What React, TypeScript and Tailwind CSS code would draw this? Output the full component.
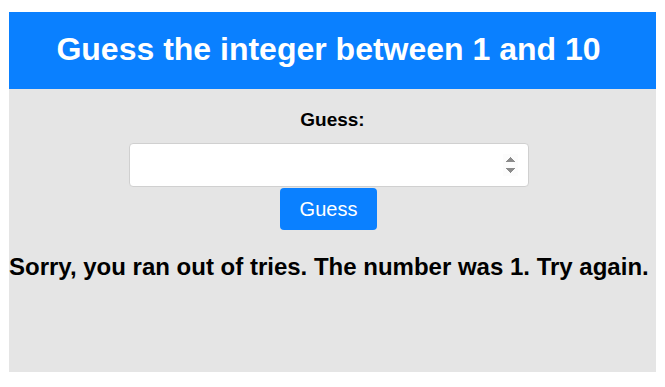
import React, { useState } from 'react';

export default function App() {
  const [guess, setGuess] = useState('');

  return (
    <div className="min-h-screen bg-white pl-[9px] pr-[9px] pt-[12px] font-['Liberation_Sans',Arial,sans-serif]">
      <div className="w-[647px] bg-[#e5e5e5]">
        <div className="flex h-[77px] items-center justify-center bg-[#0a80ff] pr-[8px] pb-[3px]">
          <h1 className="text-[32px] font-bold leading-none text-white">Guess the integer between 1 and 10</h1>
        </div>
        <div className="flex h-[283px] flex-col items-center">
          <label className="mt-[21px] text-[19px] font-bold leading-none text-black">Guess:</label>
          <input
            type="number"
            autoFocus
            value={guess}
            onChange={(e) => setGuess(e.target.value)}
            className="mt-[14px] ml-[-8px] h-[44px] w-[400px] rounded-[4px] border border-[#d0d0d0] bg-white px-[10px] text-[19px] outline-none"
          />
          <button className="mt-[1px] ml-[-8px] h-[42px] w-[97px] rounded-[4px] bg-[#0a80ff] text-[20px] leading-none text-white">
            Guess
          </button>
          <p className="mt-[25px] w-full whitespace-nowrap text-[24px] font-bold leading-none text-black">
            Sorry, you ran out of tries. The number was 1. Try again.
          </p>
        </div>
      </div>
    </div>
  );
}
